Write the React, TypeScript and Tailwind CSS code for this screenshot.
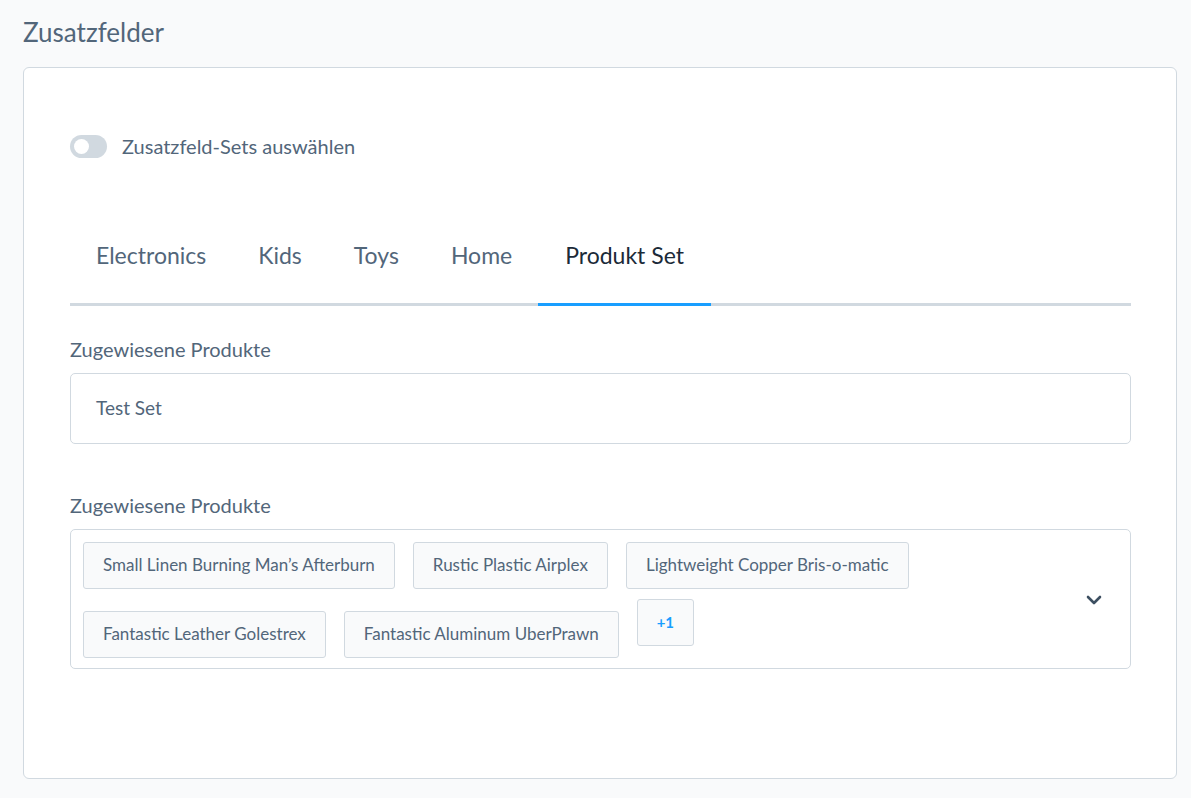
import React from 'react';

const tabs = ['Electronics', 'Kids', 'Toys', 'Home', 'Produkt Set'];

function Chip({ label }: { label: string }) {
    return (
        <div className="h-[47px] px-[19px] flex items-center bg-[#f9fafb] border border-[#d1d9e0] rounded-[3px] text-[17px] text-[#52667a] whitespace-nowrap">
            {label}
        </div>
    );
}

export default function App() {
    const active = 'Produkt Set';

    return (
        <div className="min-h-[798px] bg-[#f9fafb] pl-[23px] pr-[14px] pt-[15px] pb-[20px] font-['Lato',sans-serif] text-[#52667a]">
            <h2 className="text-[26px] leading-[34px] mb-[18px]">Zusatzfelder</h2>

            <div className="bg-white border border-[#d1d9e0] rounded-[6px] h-[712px] pl-[46px] pr-[45px] pt-[66px]">
                {/* toggle */}
                <div className="flex items-center gap-[15px] h-[24px]">
                    <div className="w-[37px] h-[23px] rounded-full bg-[#d1d9e0] flex items-center pl-[4px]">
                        <div className="w-[15px] h-[15px] rounded-full bg-white" />
                    </div>
                    <span className="text-[20px]">Zusatzfeld-Sets auswählen</span>
                </div>

                {/* tabs */}
                <div className="mt-[70px] border-b-[3px] border-[#d1d9e0] flex">
                    {tabs.map((t) => (
                        <div
                            key={t}
                            className={
                                t === active
                                    ? 'px-[27px] pt-[10px] pb-[30px] text-[23px] text-[#1b2a38] border-b-[3px] border-[#189eff] -mb-[3px]'
                                    : 'px-[26px] pt-[10px] pb-[30px] text-[23px] text-[#52667a]'
                            }
                        >
                            {t}
                        </div>
                    ))}
                </div>

                {/* text field */}
                <label className="block mt-[31px] text-[20px] leading-[24px]">Zugewiesene Produkte</label>
                <div className="mt-[12px] h-[71px] border border-[#d1d9e0] rounded-[5px] flex items-center px-[25px] text-[19px]">
                    Test Set
                </div>

                {/* multi select */}
                <label className="block mt-[49px] text-[20px] leading-[24px]">Zugewiesene Produkte</label>
                <div className="mt-[12px] h-[140px] border border-[#d1d9e0] rounded-[5px] flex items-center pl-[12px] pr-[28px] pt-[2px]">
                    <div className="flex-1 flex flex-col gap-[10px]">
                        <div className="flex gap-[18px]">
                            <Chip label="Small Linen Burning Man’s Afterburn" />
                            <Chip label="Rustic Plastic Airplex" />
                            <Chip label="Lightweight Copper Bris-o-matic" />
                        </div>
                        <div className="flex items-start gap-[18px]">
                            <div className="mt-[12px]">
                                <Chip label="Fantastic Leather Golestrex" />
                            </div>
                            <div className="mt-[12px]">
                                <Chip label="Fantastic Aluminum UberPrawn" />
                            </div>
                            <div className="h-[47px] w-[57px] flex items-center justify-center bg-[#f9fafb] border border-[#d1d9e0] rounded-[3px] text-[15px] font-bold text-[#189eff]">
                                +1
                            </div>
                        </div>
                    </div>
                    <svg width="16" height="10" viewBox="0 0 16 10">
                        <path d="M2 2 L8 8 L14 2" fill="none" stroke="#3d4f61" strokeWidth="2.6" strokeLinecap="round" strokeLinejoin="round" />
                    </svg>
                </div>
            </div>
        </div>
    );
}
